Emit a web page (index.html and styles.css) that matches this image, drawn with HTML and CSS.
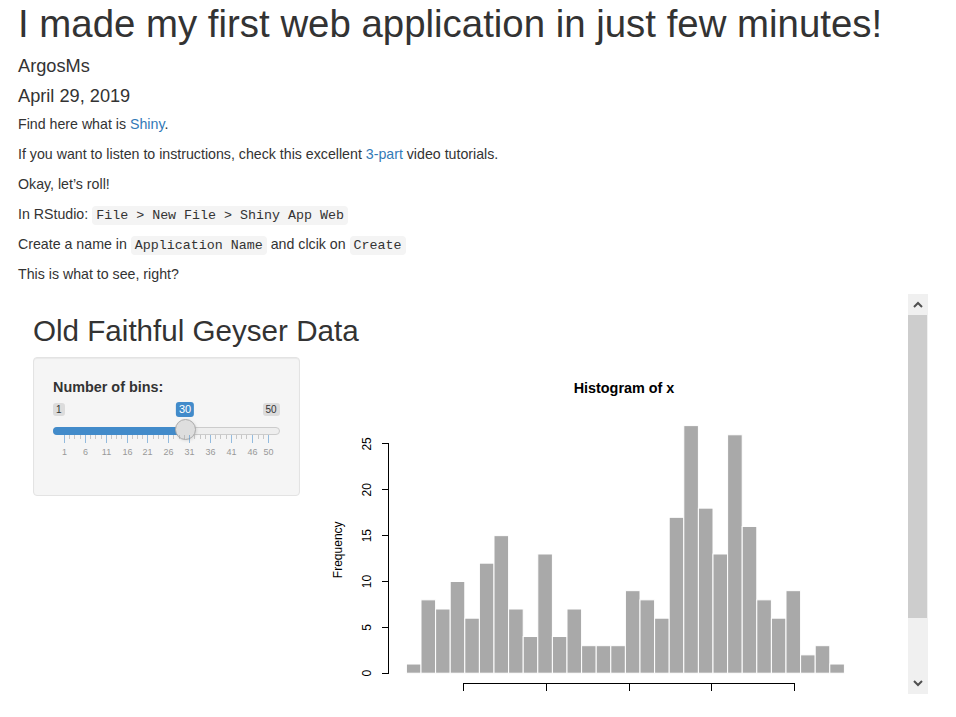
FILE: index.html
```html
<!DOCTYPE html>
<html lang="en">
<head>
<meta charset="utf-8">
<title>I made my first web application in just few minutes!</title>
<link rel="stylesheet" href="styles.css">
</head>
<body>
<div class="doc">
  <h1 class="title">I made my first web application in just few minutes!</h1>
  <h4 class="author">ArgosMs</h4>
  <h4 class="date">April 29, 2019</h4>
  <p>Find here what is <a href="#">Shiny</a>.</p>
  <p>If you want to listen to instructions, check this excellent <a href="#">3-part</a> video tutorials.</p>
  <p>Okay, let’s roll!</p>
  <p>In RStudio: <code>File &gt; New File &gt; Shiny App Web</code></p>
  <p>Create a name in <code>Application Name</code> and clcik on <code>Create</code></p>
  <p>This is what to see, right?</p>

  <div class="frame">
    <div class="app">
      <h2 class="app-title">Old Faithful Geyser Data</h2>
      <div class="row">
        <div class="side">
          <div class="well">
            <div class="form-group">
              <label class="control-label">Number of bins:</label>
              <div class="irs">
                <span class="irs-min">1</span>
                <span class="irs-max">50</span>
                <span class="irs-line"></span>
                <span class="irs-bar"></span>
                <span class="irs-handle"></span>
                <span class="irs-single">30</span>
                <div class="irs-grid">
                  <span class="pol" style="left:11px"></span>
                  <span class="pol small" style="left:16px"></span>
                  <span class="pol small" style="left:21px"></span>
                  <span class="pol small" style="left:27px"></span>
                  <span class="pol" style="left:32px"></span>
                  <span class="pol small" style="left:37px"></span>
                  <span class="pol small" style="left:42px"></span>
                  <span class="pol small" style="left:48px"></span>
                  <span class="pol" style="left:53px"></span>
                  <span class="pol small" style="left:58px"></span>
                  <span class="pol small" style="left:63px"></span>
                  <span class="pol small" style="left:68px"></span>
                  <span class="pol" style="left:74px"></span>
                  <span class="pol small" style="left:79px"></span>
                  <span class="pol small" style="left:84px"></span>
                  <span class="pol small" style="left:89px"></span>
                  <span class="pol" style="left:94px"></span>
                  <span class="pol small" style="left:100px"></span>
                  <span class="pol small" style="left:105px"></span>
                  <span class="pol small" style="left:110px"></span>
                  <span class="pol" style="left:115px"></span>
                  <span class="pol small" style="left:120px"></span>
                  <span class="pol small" style="left:126px"></span>
                  <span class="pol small" style="left:131px"></span>
                  <span class="pol" style="left:136px"></span>
                  <span class="pol small" style="left:141px"></span>
                  <span class="pol small" style="left:147px"></span>
                  <span class="pol small" style="left:152px"></span>
                  <span class="pol" style="left:157px"></span>
                  <span class="pol small" style="left:162px"></span>
                  <span class="pol small" style="left:167px"></span>
                  <span class="pol small" style="left:173px"></span>
                  <span class="pol" style="left:178px"></span>
                  <span class="pol small" style="left:183px"></span>
                  <span class="pol small" style="left:188px"></span>
                  <span class="pol small" style="left:193px"></span>
                  <span class="pol" style="left:199px"></span>
                  <span class="pol small" style="left:205px"></span>
                  <span class="pol small" style="left:210px"></span>
                  <span class="pol" style="left:215px"></span>
                  <span class="gtext" style="left:11.5px">1</span>
                  <span class="gtext" style="left:32.5px">6</span>
                  <span class="gtext" style="left:53.5px">11</span>
                  <span class="gtext" style="left:74.5px">16</span>
                  <span class="gtext" style="left:94.5px">21</span>
                  <span class="gtext" style="left:115.5px">26</span>
                  <span class="gtext" style="left:136.5px">31</span>
                  <span class="gtext" style="left:157.5px">36</span>
                  <span class="gtext" style="left:178.5px">41</span>
                  <span class="gtext" style="left:199.5px">46</span>
                  <span class="gtext" style="left:215.5px">50</span>
                </div>
              </div>
            </div>
          </div>
        </div>
        <div class="main">
          <svg class="plot" width="563" height="400" viewBox="0 0 563 400">
            <text class="main-title" x="294" y="35.7" text-anchor="middle">Histogram of x</text>
            <g class="bars">
              <rect x="76.4" y="307.03" width="14.6" height="9.17"/>
              <rect x="91.0" y="242.84" width="14.6" height="73.36"/>
              <rect x="105.6" y="252.01" width="14.6" height="64.19"/>
              <rect x="120.2" y="224.5" width="14.6" height="91.7"/>
              <rect x="134.8" y="261.18" width="14.6" height="55.02"/>
              <rect x="149.4" y="206.16" width="14.6" height="110.04"/>
              <rect x="164.0" y="178.65" width="14.6" height="137.55"/>
              <rect x="178.6" y="252.01" width="14.6" height="64.19"/>
              <rect x="193.2" y="279.52" width="14.6" height="36.68"/>
              <rect x="207.8" y="196.99" width="14.6" height="119.21"/>
              <rect x="222.4" y="279.52" width="14.6" height="36.68"/>
              <rect x="237.0" y="252.01" width="14.6" height="64.19"/>
              <rect x="251.6" y="288.69" width="14.6" height="27.51"/>
              <rect x="266.2" y="288.69" width="14.6" height="27.51"/>
              <rect x="280.8" y="288.69" width="14.6" height="27.51"/>
              <rect x="295.4" y="233.67" width="14.6" height="82.53"/>
              <rect x="310.0" y="242.84" width="14.6" height="73.36"/>
              <rect x="324.6" y="261.18" width="14.6" height="55.02"/>
              <rect x="339.2" y="160.31" width="14.6" height="155.89"/>
              <rect x="353.8" y="68.61" width="14.6" height="247.59"/>
              <rect x="368.4" y="151.14" width="14.6" height="165.06"/>
              <rect x="383.0" y="196.99" width="14.6" height="119.21"/>
              <rect x="397.6" y="77.78" width="14.6" height="238.42"/>
              <rect x="412.2" y="169.48" width="14.6" height="146.72"/>
              <rect x="426.8" y="242.84" width="14.6" height="73.36"/>
              <rect x="441.4" y="261.18" width="14.6" height="55.02"/>
              <rect x="456.0" y="233.67" width="14.6" height="82.53"/>
              <rect x="470.6" y="297.86" width="14.6" height="18.34"/>
              <rect x="485.2" y="288.69" width="14.6" height="27.51"/>
              <rect x="499.8" y="307.03" width="14.6" height="9.17"/>
            </g>
            <g class="axis">
              <line x1="58.8" y1="316.2" x2="58.8" y2="86.95"/>
              <line x1="51.6" y1="316.2" x2="58.8" y2="316.2"/>
              <line x1="51.6" y1="270.35" x2="58.8" y2="270.35"/>
              <line x1="51.6" y1="224.5" x2="58.8" y2="224.5"/>
              <line x1="51.6" y1="178.65" x2="58.8" y2="178.65"/>
              <line x1="51.6" y1="132.8" x2="58.8" y2="132.8"/>
              <line x1="51.6" y1="86.95" x2="58.8" y2="86.95"/>
              <line x1="133.6" y1="326.4" x2="464.6" y2="326.4"/>
              <line x1="133.6" y1="326.4" x2="133.6" y2="333.6"/>
              <line x1="216.4" y1="326.4" x2="216.4" y2="333.6"/>
              <line x1="299.2" y1="326.4" x2="299.2" y2="333.6"/>
              <line x1="381.9" y1="326.4" x2="381.9" y2="333.6"/>
              <line x1="464.6" y1="326.4" x2="464.6" y2="333.6"/>
            </g>
            <g class="ticklabels">
              <text transform="translate(41,316.2) rotate(-90)" text-anchor="middle">0</text>
              <text transform="translate(41,270.35) rotate(-90)" text-anchor="middle">5</text>
              <text transform="translate(41,224.5) rotate(-90)" text-anchor="middle">10</text>
              <text transform="translate(41,178.65) rotate(-90)" text-anchor="middle">15</text>
              <text transform="translate(41,132.8) rotate(-90)" text-anchor="middle">20</text>
              <text transform="translate(41,86.95) rotate(-90)" text-anchor="middle">25</text>
              <text transform="translate(12,192.8) rotate(-90)" text-anchor="middle">Frequency</text>
            </g>
          </svg>
        </div>
      </div>
    </div>
    <div class="scrollbar">
      <div class="sb-btn">
        <svg width="10" height="7" viewBox="0 0 10 7"><polyline points="1,6 5,2 9,6" fill="none" stroke="#505050" stroke-width="2"/></svg>
      </div>
      <div class="sb-thumb"></div>
      <div class="sb-track"></div>
      <div class="sb-btn">
        <svg width="10" height="7" viewBox="0 0 10 7"><polyline points="1,1 5,5 9,1" fill="none" stroke="#505050" stroke-width="2"/></svg>
      </div>
    </div>
  </div>
</div>
</body>
</html>
```

FILE: styles.css
```css
* { box-sizing: border-box; }

html, body {
  margin: 0;
  padding: 0;
  background: #fff;
}

body {
  font-family: "Liberation Sans", Arial, Helvetica, sans-serif;
  font-size: 14.2px;
  line-height: 20px;
  color: #333;
}

.doc {
  padding-left: 18px;
  width: 956px;
}

.title {
  font-size: 38.4px;
  line-height: 40px;
  font-weight: 500;
  margin: 4.4px 0 11.7px;
}

.author,
.date {
  font-size: 18.2px;
  line-height: 20px;
  font-weight: 500;
  margin: 0;
}

.author { margin-bottom: 9.5px; }
.date { margin-bottom: 8.6px; }

p {
  margin: 0 0 10px;
}

a {
  color: #337ab7;
  text-decoration: none;
}

code {
  font-family: "Liberation Mono", "Courier New", monospace;
  font-size: 13.33px;
  line-height: 1;
  padding: 2px 4px;
  color: #333;
  background: #f4f4f4;
  border-radius: 4px;
}

/* embedded app frame */
.frame {
  display: flex;
  width: 910px;
  height: 400px;
  background: #fff;
}

.app {
  flex: 1 1 auto;
  min-width: 0;
  overflow: hidden;
  padding: 0 15px;
  font-size: 14px;
}

.app-title {
  font-size: 29.6px;
  line-height: 33px;
  font-weight: 500;
  margin: 20px 0 10px;
  color: #333;
}

.row {
  display: flex;
  margin: 0 -15px;
}

.side {
  width: 33.3333%;
  padding: 0 15px;
  flex: none;
}

.main {
  width: 66.6667%;
  padding: 0 15px;
  flex: none;
}

.well {
  background: #f5f5f5;
  border: 1px solid #e3e3e3;
  border-radius: 4px;
  box-shadow: inset 0 1px 1px rgba(0, 0, 0, 0.05);
  padding: 19px;
}

.form-group {
  margin-bottom: 15px;
}

.control-label {
  display: block;
  font-weight: bold;
  font-size: 14.4px;
  line-height: 20px;
  margin-bottom: 5px;
}

/* slider */
.irs {
  position: relative;
  height: 59px;
}

.irs-min,
.irs-max,
.irs-single {
  position: absolute;
  top: 1px;
  font-size: 10px;
  line-height: 11px;
  padding: 1px 3px;
  border-radius: 3px;
  background: rgba(0, 0, 0, 0.1);
  color: #333;
}

.irs-min { left: 0; }
.irs-max { right: 0; }

.irs-single {
  top: 0;
  left: 132px;
  transform: translateX(-50%);
  font-size: 11px;
  line-height: 13px;
  background: #428bca;
  color: #fff;
}

.irs-line {
  position: absolute;
  left: 0;
  right: 0;
  top: 25px;
  height: 8px;
  background: #eee;
  border: 1px solid #ccc;
  border-radius: 16px;
}

.irs-bar {
  position: absolute;
  left: 0;
  width: 132px;
  top: 25px;
  height: 8px;
  background: #428bca;
  border-radius: 16px 0 0 16px;
}

.irs-handle {
  position: absolute;
  left: 121.5px;
  top: 17px;
  width: 21px;
  height: 21px;
  border: 1px solid #aaa;
  background: #dedede;
  border-radius: 50%;
  box-shadow: 1px 1px 3px rgba(0, 0, 0, 0.1);
}

.irs-grid {
  position: absolute;
  left: 0;
  right: 0;
  top: 33px;
  height: 24px;
}

.pol {
  position: absolute;
  top: 0;
  width: 1px;
  height: 8px;
  background: #428bca;
  opacity: 0.55;
}

.pol.small {
  height: 4px;
  background: #999;
  opacity: 0.5;
}

.gtext {
  position: absolute;
  top: 11px;
  transform: translateX(-50%);
  font-size: 9px;
  line-height: 12px;
  color: #999;
  white-space: nowrap;
}

/* plot */
.plot {
  display: block;
  font-family: "Liberation Sans", Arial, Helvetica, sans-serif;
  font-size: 12px;
}

.plot text { fill: #000; }

.main-title {
  font-weight: bold;
  font-size: 14.4px;
}

.bars rect {
  fill: #a9a9a9;
  stroke: #fff;
  stroke-width: 1;
}

.axis line {
  stroke: #000;
  stroke-width: 1;
  shape-rendering: crispEdges;
}

/* fake scrollbar of the embedded frame */
.scrollbar {
  flex: none;
  width: 20px;
  display: flex;
  flex-direction: column;
  background: #f0f0f0;
}

.sb-btn {
  flex: none;
  height: 21px;
  display: flex;
  align-items: center;
  justify-content: center;
}

.sb-btn svg { display: block; }

.sb-thumb {
  flex: none;
  height: 303px;
  margin-right: 1px;
  background: #cdcdcd;
}

.sb-track {
  flex: 1 1 auto;
}
```
